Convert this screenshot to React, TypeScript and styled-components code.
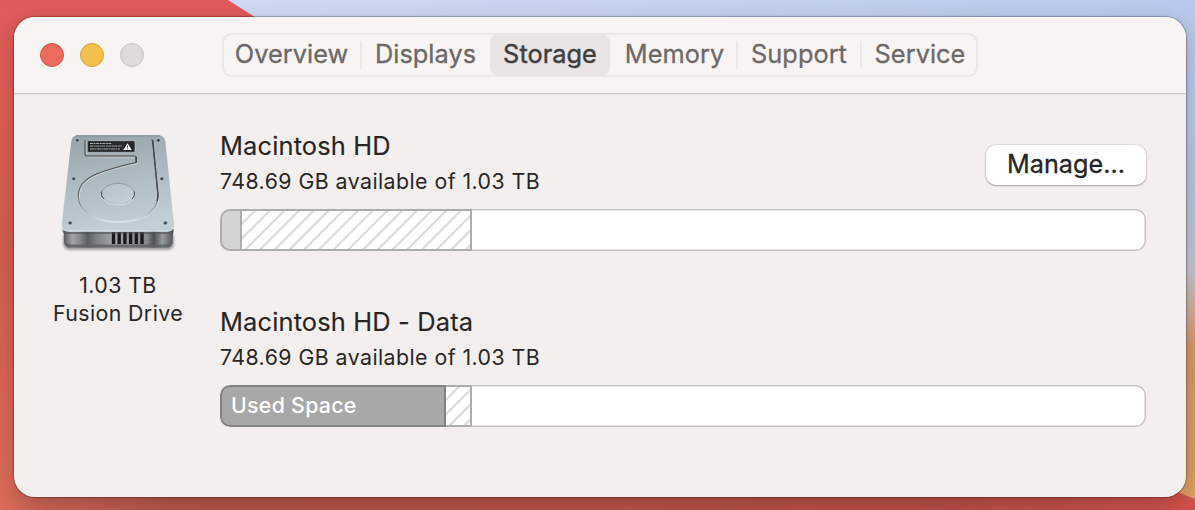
import React from "react";
import styled, { createGlobalStyle } from "styled-components";

const GlobalStyle = createGlobalStyle`
  * { box-sizing: border-box; }
  html, body { margin: 0; padding: 0; overflow: hidden; }
  body { font-family: Inter, "Liberation Sans", sans-serif; }
`;

const Desktop = styled.main`
  position: relative;
  width: 1195px;
  height: 510px;
  padding: 17px 9px 13px 14px;
  overflow: hidden;
  background: #d95a55;
`;

const Wallpaper = styled.svg`
  position: absolute;
  inset: 0;
`;

const Window = styled.section`
  position: relative;
  display: flex;
  flex-direction: column;
  width: 1172px;
  height: 480px;
  border-radius: 21px;
  overflow: hidden;
  background: #f3efee;
`;

const WindowShadow = styled.div`
  position: relative;
  border-radius: 21px;
  box-shadow: 0 0 1px 1px rgba(0, 0, 0, 0.26), 0 5px 18px rgba(0, 0, 0, 0.2);
`;

const TitleBar = styled.header`
  display: flex;
  align-items: flex-start;
  height: 77px;
  flex: none;
  background: #f8f4f3;
  border-bottom: 1px solid #cbc7c6;
  box-shadow: 0 1px 0 #e9e5e4;
`;

const Lights = styled.div`
  display: flex;
  gap: 16px;
  width: 208px;
  padding: 26px 0 0 26px;
`;

const Light = styled.span<{ $fill: string; $edge: string }>`
  width: 24px;
  height: 24px;
  border-radius: 50%;
  background: ${(p) => p.$fill};
  border: 1px solid ${(p) => p.$edge};
`;

const Tabs = styled.nav`
  display: flex;
  height: 44px;
  margin-top: 16px;
  border-radius: 10px;
  box-shadow: inset 0 0 0 2px #ebe7e6;
`;

const Tab = styled.button<{ $width: number; $lead?: number; $active?: boolean; $divided?: boolean }>`
  position: relative;
  display: flex;
  align-items: center;
  justify-content: center;
  width: ${(p) => p.$width}px;
  height: 44px;
  padding: 0 0 2px ${(p) => p.$lead ?? 0}px;
  border: 0;
  border-radius: 10px;
  background: ${(p) => (p.$active ? "#e9e5e4" : "transparent")};
  color: ${(p) => (p.$active ? "#403f3e" : "#6c6968")};
  font: 400 25.3px/42px Inter, "Liberation Sans", sans-serif;
  -webkit-text-stroke: ${(p) => (p.$active ? 0.45 : 0.3)}px currentColor;
  letter-spacing: 0.05px;
  white-space: nowrap;

  &::after {
    content: ${(p) => (p.$divided ? '""' : "none")};
    position: absolute;
    right: -1px;
    top: 8px;
    width: 2px;
    height: 28px;
    background: #ebe7e6;
  }
`;

const Content = styled.div`
  display: flex;
  flex: 1;
  padding-right: 40px;
`;

const Drive = styled.aside`
  display: flex;
  flex-direction: column;
  align-items: center;
  width: 206px;
  padding: 40px 0 0 2px;
`;

const DriveCaption = styled.p`
  margin: 15px 0 0;
  color: #272626;
  font-size: 21.3px;
  line-height: 28px;
  letter-spacing: 0.42px;
  text-align: center;
`;

const Volumes = styled.div`
  display: flex;
  flex-direction: column;
  gap: 53px;
  width: 926px;
  padding-top: 34px;
`;

const Volume = styled.section`
  display: flex;
  flex-direction: column;
`;

const VolumeHead = styled.div`
  display: flex;
  justify-content: space-between;
  height: 81px;
`;

const VolumeName = styled.h2`
  margin: 0;
  color: #272626;
  font-size: 25.4px;
  font-weight: 400;
  line-height: 36px;
  letter-spacing: 0.16px;
  -webkit-text-stroke: 0.15px currentColor;
`;

const VolumeInfo = styled.p`
  margin: 3px 0 0;
  color: #272626;
  font-size: 21.3px;
  line-height: 28px;
  letter-spacing: 0.45px;
`;

const ManageButton = styled.button`
  width: 160px;
  height: 40px;
  margin: 17px 0 0;
  padding: 0 0 2px;
  border: 0;
  border-radius: 10px;
  background: #fff;
  color: #262525;
  box-shadow: 0 0 1px 1px rgba(0, 0, 0, 0.08), 0 1px 2px rgba(0, 0, 0, 0.28);
  font: 400 25.2px/38px Inter, "Liberation Sans", sans-serif;
  -webkit-text-stroke: 0.3px currentColor;
`;

const Bar = styled.div`
  position: relative;
  display: flex;
  height: 42px;
  border-radius: 10px;
  overflow: hidden;
  background: #fff;
  box-shadow: inset 0 0 0 1.5px #c6c4c3;
`;

const Segment = styled.div<{ $width: number; $kind: "system" | "used" | "other"; $first?: boolean }>`
  width: ${(p) => p.$width}px;
  height: 42px;
  padding-left: 9px;
  border: 2px solid ${(p) => (p.$kind === "used" ? "#828282" : "#adadad")};
  border-width: 2px 2px 2px ${(p) => (p.$first ? "2px" : "0")};
  border-radius: ${(p) => (p.$first ? "10px 0 0 10px" : "0")};
  color: #fff;
  font-size: 21.3px;
  font-weight: 500;
  line-height: 36px;
  letter-spacing: 0.3px;
  white-space: nowrap;
  background: ${(p) =>
    p.$kind === "used"
      ? "#a8a8a8"
      : p.$kind === "system"
        ? "#d4d4d4"
        : "repeating-linear-gradient(135deg, #fff 0 7.4px, #dcdcdc 8.2px 9.7px, #fff 10.4px)"};
`;

const DriveIcon = () => (
  <svg width="120" height="122" viewBox="0 0 120 122" aria-label="Fusion Drive">
    <defs>
      <linearGradient id="plate" x1="0.15" y1="0" x2="0.35" y2="1">
        <stop offset="0" stopColor="#96a3aa" />
        <stop offset="0.45" stopColor="#adb9c1" />
        <stop offset="1" stopColor="#c3cfd7" />
      </linearGradient>
      <linearGradient id="base" x1="0" x2="1">
        <stop offset="0" stopColor="#54585a" />
        <stop offset="0.08" stopColor="#a1a5a6" />
        <stop offset="0.15" stopColor="#85898a" />
        <stop offset="0.22" stopColor="#5a5e60" />
        <stop offset="0.3" stopColor="#7d8183" />
        <stop offset="0.45" stopColor="#a3a6a7" />
        <stop offset="0.76" stopColor="#85898a" />
        <stop offset="0.82" stopColor="#4c5052" />
        <stop offset="0.9" stopColor="#979b9d" />
        <stop offset="1" stopColor="#505456" />
      </linearGradient>
      <linearGradient id="groove" gradientUnits="userSpaceOnUse" x1="0" y1="22" x2="0" y2="88">
        <stop offset="0" stopColor="#4d4444" />
        <stop offset="0.6" stopColor="#6b6a6c" />
        <stop offset="0.82" stopColor="#98a4ac" />
        <stop offset="1" stopColor="#e4eef4" />
      </linearGradient>
      <linearGradient id="hub" x1="0" y1="0" x2="0.7" y2="1">
        <stop offset="0" stopColor="#b5c0c7" />
        <stop offset="1" stopColor="#c5d0d8" />
      </linearGradient>
      <filter id="soft" x="-10%" y="-30%" width="120%" height="160%">
        <feGaussianBlur stdDeviation="1.3" />
      </filter>
    </defs>
    <path d="M5 102h111v8q-1 6-7 6H12q-6 0-7-6Z" fill="#6b6868" opacity=".6" filter="url(#soft)" />
    <path d="M5.500 95h110l-1 13q-1 5.500-6 5.500H12q-5 0-6-5.500Z" fill="url(#base)" />
    <path d="M6 107.500q3 3 8 3h93q6 0 8-3-.5 6-6.500 6H12q-5.500 0-6-6Z" fill="#5e6263" opacity=".85" />
    <path d="M55.500 98v12M61.200 98v12M66.900 98v12M72.600 98v12M78.300 98v12M84 98v12" stroke="#17191a" strokeWidth="3.400" />
    <path d="M4.500 95q3 3 7 3h98q4 0 6-3v3.500q-3 1.500-6 1.500h-98q-4 0-7-1.500Z" fill="#4b5154" opacity=".6" />
    <path d="M20 1.200Q14.500 1.200 13.300 7L3.700 90.500Q3.500 97.500 10 97.500h99.500Q116 97.500 116 90.500L107.300 7Q106 1.200 100 1.200Z" fill="url(#plate)" />
    <path d="M4 93q1 4 7 4h98q5.500 0 6.500-4" fill="none" stroke="#dbe5eb" strokeWidth="1" />
    <path d="M18 1.900h84" stroke="#7f8b91" strokeWidth="1" />
    <path d="M94.500 6.200 100 62C100 77 84 87.700 60 87.700 37 87.700 20.300 77 20.300 62 20.300 43 42 37 78 28.500V24q0-2-2-2H29q-2 0-2-2V6.200" fill="none" stroke="#d9e2e8" strokeWidth=".7" transform="translate(1 1)" />
    <path d="M94.500 6.200 100 62C100 77 84 87.700 60 87.700 37 87.700 20.300 77 20.300 62 20.300 43 42 37 78 28.500V24q0-2-2-2H29q-2 0-2-2V6.200" fill="none" stroke="url(#groove)" strokeWidth="1.100" />
    <path d="M78.300 22.500v6" stroke="#4d4444" strokeWidth="1.500" />
    <path d="M93.500 6.200Q95 6 95 8L100 60Q100 64 99 67" fill="none" stroke="#47474a" strokeWidth="1.400" />
    <rect x="29.300" y="6.700" width="47.700" height="11.600" rx="1" fill="#25292b" stroke="#cbd4d8" strokeWidth=".6" />
    <path d="M32 9.500h22M32 12.100h32" stroke="#a5abad" strokeWidth="1" strokeDasharray="3 .6 2 .5" />
    <path d="M32 15h30" stroke="#a5abad" strokeWidth="1.200" strokeDasharray="4 .5 2 .5" />
    <path d="M69.500 9.300 73.800 16h-8.600Z" fill="#fff" />
    <path d="M69.500 11.500v2.300M69.500 14.600v.8" stroke="#222" strokeWidth=".8" />
    <ellipse cx="60" cy="60" rx="16.700" ry="10.700" fill="url(#hub)" stroke="#8b959b" strokeWidth=".9" />
    <path d="M44.500 64c3 4.700 8.500 6.800 15.500 6.800S72.500 68.700 75.500 64" fill="none" stroke="#dfe8ed" strokeWidth="1" />
    <path d="M43.700 57.500q-1.300 4 2.200 7.500M76.300 57.500q1.300 4-2.200 7.500" fill="none" stroke="#4c5256" strokeWidth="1" />
    {[[19.3, 6.3], [100.3, 6.3], [15.7, 44.7], [103.9, 44.7], [12.1, 89], [107.4, 89]].map(([x, y]) => (
      <g key={`${x}-${y}`}>
        <ellipse cx={x} cy={y} rx="2.400" ry="2" fill="#78868f" stroke="#ccd7dd" strokeWidth=".5" />
        <circle cx={x} cy={y} r="1.200" fill="#344550" />
      </g>
    ))}
  </svg>
);

const tabs = [
  { name: "Overview", width: 139, divided: true },
  { name: "Displays", width: 129 },
  { name: "Storage", width: 120, active: true },
  { name: "Memory", width: 127, lead: 2, divided: true },
  { name: "Support", width: 124, divided: true },
  { name: "Service", width: 117, lead: 1 },
];

export default function App() {
  return (
    <>
      <GlobalStyle />
      <Desktop>
        <Wallpaper width="1195" height="510" viewBox="0 0 1195 510" aria-hidden="true">
          <defs>
            <linearGradient id="red" x1="0" y1="0" x2="0" y2="1">
              <stop offset="0" stopColor="#df5b5b" />
              <stop offset="0.5" stopColor="#cf5d55" />
              <stop offset="1" stopColor="#db6a58" />
            </linearGradient>
            <linearGradient id="sky" gradientUnits="userSpaceOnUse" x1="0" y1="0" x2="0" y2="510">
              <stop offset="0" stopColor="#b8c8ec" />
              <stop offset="0.35" stopColor="#b6c2dc" />
              <stop offset="0.53" stopColor="#c0c2cf" />
              <stop offset="0.62" stopColor="#d0a792" />
              <stop offset="0.68" stopColor="#d39468" />
              <stop offset="1" stopColor="#da9f5f" />
            </linearGradient>
            <linearGradient id="skyTop" x1="0" x2="1">
              <stop offset="0" stopColor="#cfd9f1" />
              <stop offset="1" stopColor="#b8c8ec" />
            </linearGradient>
            <linearGradient id="ground" x1="0" x2="1">
              <stop offset="0" stopColor="#db6a58" />
              <stop offset="0.04" stopColor="#c76353" />
              <stop offset="0.14" stopColor="#b35548" />
              <stop offset="0.8" stopColor="#b54d45" />
              <stop offset="1" stopColor="#cf504a" />
            </linearGradient>
          </defs>
          <path d="M0 0h1195v510H0z" fill="url(#red)" />
          <path d="M228 0h967v30H275z" fill="url(#skyTop)" />
          <path d="M1170 16h25v494h-25z" fill="url(#sky)" />
          <path d="M0 490h1172L1195 499v11H0z" fill="url(#ground)" />
        </Wallpaper>
        <WindowShadow>
          <Window>
            <TitleBar>
              <Lights>
                <Light $fill="#ec6a5e" $edge="#dc5147" />
                <Light $fill="#f4bf4f" $edge="#d7a240" />
                <Light $fill="#dddad9" $edge="#c4c1c0" />
              </Lights>
              <Tabs>
                {tabs.map((t) => (
                  <Tab key={t.name} $width={t.width} $lead={t.lead} $active={t.active} $divided={t.divided}>
                    {t.name}
                  </Tab>
                ))}
              </Tabs>
            </TitleBar>
            <Content>
              <Drive>
                <DriveIcon />
                <DriveCaption>
                  1.03 TB
                  <br />
                  Fusion Drive
                </DriveCaption>
              </Drive>
              <Volumes>
                <Volume>
                  <VolumeHead>
                    <div>
                      <VolumeName>Macintosh HD</VolumeName>
                      <VolumeInfo>748.69 GB available of 1.03 TB</VolumeInfo>
                    </div>
                    <ManageButton>Manage...</ManageButton>
                  </VolumeHead>
                  <Bar>
                    <Segment $width={22} $kind="system" $first />
                    <Segment $width={230} $kind="other" />
                  </Bar>
                </Volume>
                <Volume>
                  <VolumeHead>
                    <div>
                      <VolumeName>Macintosh HD - Data</VolumeName>
                      <VolumeInfo>748.69 GB available of 1.03 TB</VolumeInfo>
                    </div>
                  </VolumeHead>
                  <Bar>
                    <Segment $width={226} $kind="used" $first>Used Space</Segment>
                    <Segment $width={26} $kind="other" />
                  </Bar>
                </Volume>
              </Volumes>
            </Content>
          </Window>
        </WindowShadow>
      </Desktop>
    </>
  );
}
